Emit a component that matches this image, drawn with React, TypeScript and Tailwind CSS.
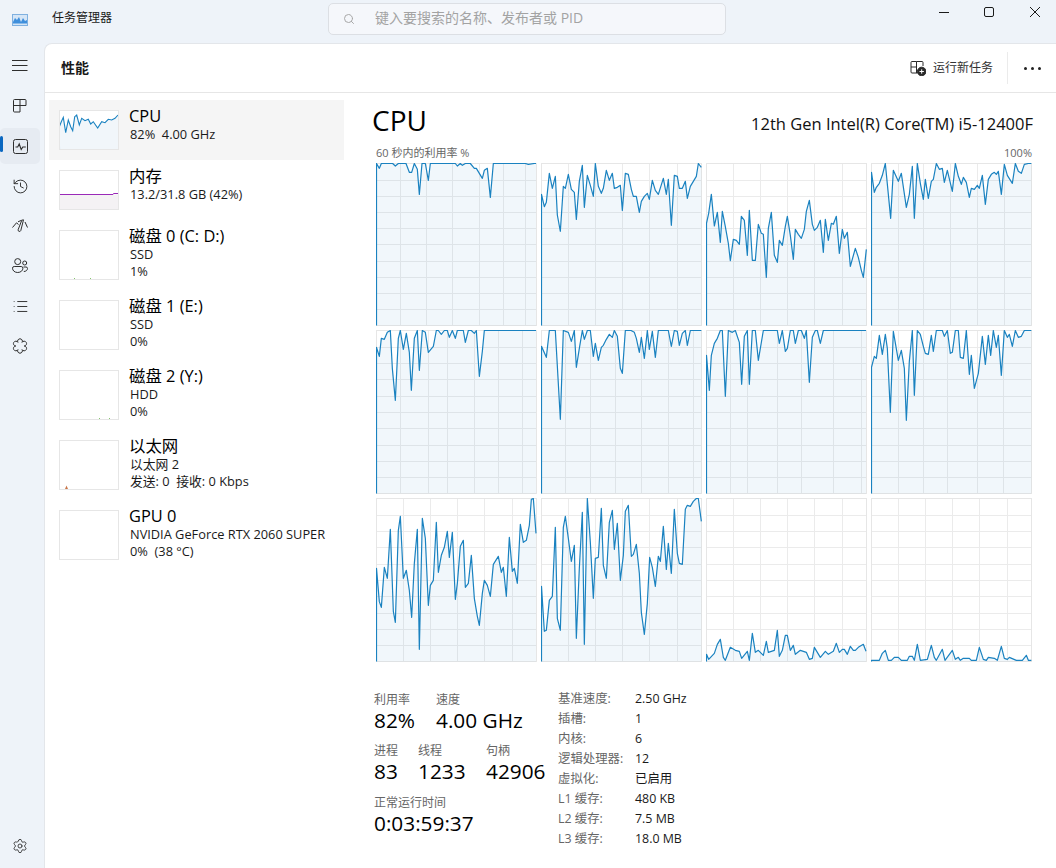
import React from "react";
import { History, List, Settings, Search } from "lucide-react";

type Cfg = { ox: number; oy: number; x: number; y: number; w: number; h: number; vs: number[]; hs: number[]; p: number[] };

const H1 = [180, 196, 212, 228, 244, 261, 277, 293, 309];
const H2 = [347, 363, 379, 396, 412, 428, 445, 461, 477];
const H3 = [515, 531, 547, 564, 580, 596, 613, 629, 645];

const cells: Cfg[] = [
  { ox: 366, oy: 150, x: 376, y: 163, w: 161, h: 163, hs: H1, vs: [400, 426, 452, 479, 503, 525],
    p: [31,40,40,55,46,40,80,40,88,48,97,40,120,40,130,67,137,67,145,40,154,58,160,133,168,40,178,40,187,91,193,40,268,40,274,48,283,40,289,46,298,40,313,40,325,55,331,55,349,85,355,61,364,55,373,142,382,40,478,40,487,43,505,40,510,40] },
  { ox: 366, oy: 150, x: 541, y: 163, w: 161, h: 163, hs: H1, vs: [568, 595, 622, 649, 677],
    p: [526,133,535,170,541,157,550,70,559,115,568,79,574,195,583,244,592,109,598,115,607,73,616,118,625,127,631,208,640,94,649,46,655,172,664,76,673,106,682,139,688,40,697,109,706,130,712,115,721,61,730,91,739,70,745,115,754,112,763,106,769,181,778,70,787,73,796,118,802,139,811,139,820,187,826,154,835,139,844,130,850,148,859,91,868,121,877,133,892,85,901,133,907,88,916,226,925,76,934,79,940,115,949,115,958,94,964,145,973,109,991,79,997,40,1006,52] },
  { ox: 700, oy: 160, x: 706, y: 163, w: 161, h: 163, hs: H1, vs: [733, 760, 787, 814, 842],
    p: [19,190,26,160,34,103,43,198,52,157,61,247,67,154,76,200,85,250,91,302,100,238,109,241,118,253,124,169,133,181,142,286,148,151,157,301,166,301,175,193,184,220,190,223,199,352,205,205,214,157,223,286,232,307,238,241,247,256,256,199,262,169,271,226,280,298,286,208,295,223,304,235,313,208,319,154,328,121,337,193,343,211,352,202,361,181,370,277,376,178,385,241,394,190,400,193,409,169,418,280,427,208,433,235,442,217,451,319,466,265,475,292,484,331,490,352,499,268] },
  { ox: 700, oy: 160, x: 871, y: 163, w: 161, h: 163, hs: H1, vs: [898, 923, 950, 977, 1004],
    p: [514,37,523,97,529,82,538,70,547,46,556,10,565,103,572,175,580,31,595,64,604,40,619,142,628,103,637,19,643,175,652,10,661,70,670,118,676,58,685,115,694,64,700,58,709,10,718,28,727,25,733,67,742,31,757,94,766,10,775,49,784,73,790,52,799,67,808,112,814,85,823,88,832,76,838,85,847,46,856,133,865,58,874,43,883,37,889,43,895,34,904,103,913,13,922,46,937,70,946,10,955,34,964,40,973,13,985,10,994,10] },
  { ox: 366, oy: 325, x: 376, y: 330, w: 161, h: 164, hs: H2, vs: [400, 428, 447, 474, 498, 522],
    p: [31,67,40,94,46,40,55,43,64,22,73,16,79,130,88,226,97,40,103,16,112,73,121,25,130,82,136,196,145,40,154,16,160,136,169,16,178,22,187,82,202,64,211,16,217,16,226,28,235,16,244,16,250,37,259,16,268,40,274,16,292,16,298,52,307,16,316,16,325,25,331,16,340,154,349,79,355,16,510,16] },
  { ox: 366, oy: 325, x: 541, y: 330, w: 161, h: 164, hs: H2, vs: [565, 590, 615, 641, 668, 693],
    p: [526,64,541,97,550,16,568,16,583,283,592,16,607,22,616,49,625,16,631,127,640,70,649,16,655,43,664,16,673,16,682,94,688,55,697,106,706,67,712,61,721,43,730,28,739,37,745,16,754,34,763,130,769,145,778,16,795,16,805,22,811,40,820,82,826,37,835,100,844,16,850,73,859,19,868,97,877,16,907,16,916,64,925,16,934,19,940,61,949,25,958,16,964,61,973,16,1006,16] },
  { ox: 700, oy: 325, x: 706, y: 330, w: 161, h: 164, hs: H2, vs: [730, 747, 777, 801, 833, 861],
    p: [19,91,28,196,34,91,43,55,52,40,61,16,67,16,76,214,85,16,97,22,106,16,118,52,125,178,133,34,142,16,148,178,157,16,166,16,175,106,190,16,232,16,238,55,247,16,256,79,262,70,271,16,280,16,286,55,295,16,304,16,313,40,319,16,328,172,337,37,346,16,352,16,361,55,370,16,498,16] },
  { ox: 700, oy: 325, x: 871, y: 330, w: 161, h: 164, hs: H2, vs: [898, 923, 947, 977, 1003],
    p: [514,127,523,94,529,100,538,31,547,88,556,28,562,70,571,262,580,19,595,106,604,76,613,130,619,286,628,109,637,16,643,211,652,16,661,28,670,64,676,85,685,88,694,31,700,79,709,16,727,16,733,34,742,16,751,85,757,82,766,16,775,16,781,97,790,100,799,16,808,148,814,91,823,190,835,145,847,34,856,118,865,31,872,91,880,16,889,67,895,31,904,151,913,16,922,37,928,28,937,64,946,16,955,37,964,34,973,16,994,16] },
  { ox: 366, oy: 490, x: 376, y: 498, w: 161, h: 164, hs: H3, vs: [403, 430, 457, 484, 512],
    p: [31,235,40,335,46,352,55,232,64,265,73,118,82,364,88,397,97,121,103,79,112,265,121,241,130,301,137,382,145,220,154,118,160,478,169,85,178,145,187,346,193,286,202,271,211,97,217,247,226,196,235,172,244,124,250,202,259,127,268,328,274,280,283,169,292,151,298,292,307,280,316,196,325,325,334,379,340,406,349,310,355,271,364,286,373,319,382,223,397,199,406,247,412,232,421,319,430,142,439,244,445,235,454,280,463,103,472,157,481,151,490,106,496,28,502,25,510,130] },
  { ox: 366, oy: 490, x: 541, y: 498, w: 161, h: 164, hs: H3, vs: [568, 595, 622, 649, 677],
    p: [526,289,535,424,541,421,550,331,559,319,568,112,574,385,583,421,592,112,598,79,607,145,616,214,625,166,631,445,640,235,649,67,655,463,664,25,673,157,682,325,688,205,697,202,706,55,712,226,721,265,730,97,739,61,745,178,754,100,763,271,772,196,778,64,787,46,796,199,802,193,811,163,820,250,826,367,835,433,844,340,851,202,859,232,868,289,877,199,883,214,892,109,901,238,907,160,916,250,925,58,934,190,940,220,949,223,958,58,964,46,973,49,982,34,991,25,997,25,1006,94] },
  { ox: 700, oy: 490, x: 706, y: 498, w: 161, h: 164, hs: H3, vs: [733, 760, 787, 814, 842],
    p: [19,493,26,508,43,490,52,463,61,448,70,502,76,511,91,472,106,481,118,484,125,505,142,484,148,511,157,430,166,487,175,481,190,496,199,454,205,487,223,481,232,421,238,499,247,481,256,436,262,436,271,481,280,466,286,493,301,481,319,487,328,508,337,505,343,472,361,502,376,484,385,493,400,484,409,460,418,487,427,478,433,478,442,493,451,469,460,481,466,481,475,472,490,463,498,484] },
  { ox: 700, oy: 490, x: 871, y: 498, w: 161, h: 164, hs: H3, vs: [898, 925, 952, 979, 1007],
    p: [514,511,526,511,538,511,547,490,556,481,565,511,574,511,583,502,595,502,604,511,622,511,628,499,637,499,643,511,652,463,661,511,682,508,694,466,703,502,709,511,727,478,735,511,757,481,766,508,775,502,781,511,790,505,808,505,814,511,829,511,838,472,850,508,859,511,865,502,883,505,892,511,904,469,913,505,922,508,928,502,949,511,967,511,979,496,985,511,994,511] },
];

function Chart({ c }: { c: Cfg }) {
  const pts: [number, number][] = [];
  for (let i = 0; i < c.p.length; i += 2) {
    pts.push([Math.min(c.w - 0.5, Math.max(0.5, c.ox + c.p[i] / 3 - c.x)), Math.min(c.h - 1, Math.max(0.5, c.oy + c.p[i + 1] / 3 - c.y))]);
  }
  const line = pts.map((q) => q.join(",")).join(" ");
  const last = pts[pts.length - 1];
  const area = `0.5,${c.h - 0.5} ${line} ${last[0]},${c.h - 0.5}`;
  return (
    <svg width={c.w} height={c.h} className="block">
      <rect x={0} y={0} width={c.w} height={c.h} fill="#fff" />
      {c.hs.map((y) => (
        <line key={y} x1={0} x2={c.w} y1={y - c.y + 0.5} y2={y - c.y + 0.5} stroke="#ebebeb" />
      ))}
      {c.vs.map((x) => (
        <line key={x} x1={x - c.x + 0.5} x2={x - c.x + 0.5} y1={0} y2={c.h} stroke="#ebebeb" />
      ))}
      <rect x={0.5} y={0.5} width={c.w - 1} height={c.h - 1} fill="none" stroke="#e6e6e6" />
      <polygon points={area} fill="#117dbb" fillOpacity={0.06} />
      <polyline points={`0.5,${c.h - 0.5} ${line}`} fill="none" stroke="#1a82c0" strokeWidth={1.2} strokeLinejoin="round" />
    </svg>
  );
}

const cpuThumb = [178,380,184,365,190,352,197,398,205,360,212,380,218,392,224,350,230,345,238,375,245,355,255,362,265,358,272,372,280,365,293,384,305,365,315,368,325,358,335,360,345,355,354,345];

function Thumb({ kind, h }: { kind: string; h: number }) {
  const w = 60;
  let inner: React.ReactNode = null;
  if (kind === "cpu") {
    const l = [];
    for (let i = 0; i < cpuThumb.length; i += 2) l.push(`${(cpuThumb[i] / 3 - 59).toFixed(1)},${(cpuThumb[i + 1] / 3 - 110).toFixed(1)}`);
    const s = l.join(" ");
    inner = (
      <>
        <polygon points={`0.5,39.5 ${s} 59,39.5`} fill="#f1f6fa" />
        <polyline points={`0.5,39.5 ${s}`} fill="none" stroke="#1a82c0" strokeWidth={1.1} />
      </>
    );
  } else if (kind === "mem") {
    inner = (
      <>
        <rect x={0.5} y={24.5} width={59} height={15} fill="#f4f2f4" />
        <polyline points="0.5,39.5 0.5,24.5 54,24.5 54.5,23.5 59,23.5" fill="none" stroke="#9a2ab8" />
      </>
    );
  } else if (kind === "d0") {
    inner = (
      <>
        <rect x={15} y={48} width={1} height={1} fill="#84c56c" />
        <rect x={31} y={48} width={1} height={1} fill="#84c56c" />
      </>
    );
  } else if (kind === "d2") {
    inner = (
      <>
        <rect x={40} y={48} width={1} height={1} fill="#84c56c" />
        <rect x={50} y={48} width={1} height={1} fill="#84c56c" />
      </>
    );
  } else if (kind === "net") {
    inner = <polygon points="6,49 9,49 7.5,45.500" fill="#c9764a" />;
  }
  return (
    <svg width={w} height={h} className="block shrink-0 mt-[10px]">
      <rect x={0} y={0} width={w} height={h} fill="#fff" />
      {inner}
      <rect x={0.5} y={0.5} width={w - 1} height={h - 1} fill="none" stroke="#e6e6e6" />
    </svg>
  );
}

const rows = [
  { kind: "cpu", h: 40, rh: "h-[60px]", t: "CPU", s: ["82%  4.00 GHz"], sel: true },
  { kind: "mem", h: 40, rh: "h-[60px]", t: "内存", s: ["13.2/31.8 GB (42%)"] },
  { kind: "d0", h: 50, rh: "h-[70px]", t: "磁盘 0 (C: D:)", s: ["SSD", "1%"] },
  { kind: "d1", h: 50, rh: "h-[70px]", t: "磁盘 1 (E:)", s: ["SSD", "0%"] },
  { kind: "d2", h: 50, rh: "h-[70px]", t: "磁盘 2 (Y:)", s: ["HDD", "0%"] },
  { kind: "net", h: 50, rh: "h-[70px]", t: "以太网", s: ["以太网 2", "发送: 0  接收: 0 Kbps"] },
  { kind: "gpu", h: 50, rh: "h-[70px]", t: "GPU 0", s: ["NVIDIA GeForce RTX 2060 SUPER", "0%  (38 °C)"] },
];

const I = "#2e2e2e";

function Rail() {
  const P = { stroke: I, fill: "none", strokeWidth: 1 };
  const items: React.ReactNode[] = [
    <svg key="m" width="16" height="12" viewBox="0 0 16 12" {...P}><path d="M0 .5h15.500M0 5.500h15.500M0 10.500h15.500" /></svg>,
    <svg key="p" width="14" height="14" viewBox="0 0 14 14" {...P}><path d="M1.500.5H7v12.500H1.500a1 1 0 0 1-1-1V1.500a1 1 0 0 1 1-1ZM.5 6.500H13V1.500a1 1 0 0 0-1-1H7" /></svg>,
    <svg key="f" width="15" height="15" viewBox="0 0 15 15" {...P}><rect x=".5" y=".5" width="14" height="14" rx="2" /><path d="M2.500 8h2.200l1.500-3 2 5.500 1.600-2.500h3" strokeWidth="1.100" /></svg>,
    <History key="h" size={17} strokeWidth={1.35} color={I} />,
    <svg key="g" width="16" height="14" viewBox="0 0 16 14" {...P}><path d="M.5 8.500 4.500 3.800l2 1.700M6 2.800 9.500 1.300M13 3l2.500 5.500" /><path d="M11.500.8 8.800 11.500a1.400 1.400 0 0 1-2.700-.7L9.800 1.200Z" /></svg>,
    <svg key="u" width="16" height="16" viewBox="0 0 16 16" {...P}><circle cx="5.700" cy="3.600" r="3" /><circle cx="12.700" cy="5" r="2" /><path d="M2.200 8.500h7a1.700 1.700 0 0 1 1.700 1.700c0 2.400-2.200 4.300-5.200 4.300s-5.200-1.900-5.200-4.300a1.700 1.700 0 0 1 1.700-1.700Z" /><path d="M11.500 9h2.500a1.500 1.500 0 0 1 1.500 1.500c0 1.700-1.600 3-3.700 3" /></svg>,
    <List key="l" size={17} strokeWidth={1.35} color={I} />,
    <svg key="s" width="16" height="16" viewBox="0 0 16 16" {...P}><path d="M10.100 4.360A2.400 2.400 0 1 1 12.200 8A2.400 2.400 0 1 1 10.100 11.640A2.400 2.400 0 1 1 5.900 11.640A2.400 2.400 0 1 1 3.800 8A2.400 2.400 0 1 1 5.900 4.360A2.400 2.400 0 1 1 10.100 4.360Z" /></svg>,
  ];
  return (
    <div className="w-[44px] shrink-0 flex flex-col pt-[3px] pb-[2px]">
      {items.map((n, i) => (
        <div key={i} className="h-[40px] flex items-center relative">
          <div className={`w-[40px] h-[36px] flex items-center justify-center rounded-[5px] ${i === 2 ? "bg-[#e6ebf2]" : ""}`}>{n}</div>
          {i === 2 && <div className="absolute left-0 top-[10px] w-[3px] h-[16px] rounded-[2px] bg-[#0a67c0]" />}
        </div>
      ))}
      <div className="mt-auto h-[40px] flex items-center">
        <div className="w-[40px] h-[36px] flex items-center justify-center"><Settings size={16} strokeWidth={1.3} color={I} /></div>
      </div>
    </div>
  );
}

const stat = "text-[12px] leading-[16px] text-[#666]";
const big = "text-[20.8px] leading-[28px] text-black -mt-[2px]";

const specs = [
  ["基准速度:", "2.50 GHz"], ["插槽:", "1"], ["内核:", "6"], ["逻辑处理器:", "12"],
  ["虚拟化:", "已启用"], ["L1 缓存:", "480 KB"], ["L2 缓存:", "7.5 MB"], ["L3 缓存:", "18.0 MB"],
];

export default function App() {
  return (
    <div className="w-[1056px] h-[868px] overflow-hidden flex flex-col bg-[#eef3f9] text-black font-['Open_Sans','Noto_Sans_CJK_SC',sans-serif]">
      <div className="h-[43px] shrink-0 flex items-start relative">
        <div className="w-[52px] pl-[12px] pt-[14px] shrink-0">
          <svg width="16" height="12" viewBox="0 0 16 12" className="block">
            <rect x=".5" y=".5" width="15" height="11" fill="#d5e5f6" stroke="#7fb0e0" />
            <path d="M1 8l2-4 2 2 2-3 2 5 2-4 2 3 2-1v3.500H1Z" fill="#3f8fdc" />
          </svg>
        </div>
        <div className="text-[12px] leading-[16px] mt-[10px] text-[#1a1a1a]">任务管理器</div>
        <div className="absolute left-[328px] top-[3px] w-[398px] h-[32px] rounded-[5px] border border-[#dcdfe4] bg-[#f5f7fb] flex items-center">
          <Search size={12} color="#a8a8a8" className="ml-[14px]" />
          <span className="ml-[20px] text-[14px] leading-[18px] -mt-[2px] text-[#a3a3a3]">键入要搜索的名称、发布者或 PID</span>
        </div>
        <div className="ml-auto">
          <svg width="120" height="24" viewBox="0 0 120 24" fill="none" stroke="#1a1a1a" strokeWidth="1" className="block">
            <path d="M3 12.500H13" />
            <rect x="48.500" y="7.500" width="9" height="9" rx="1.500" />
            <path d="M94 7l10 10M104 7 94 17" />
          </svg>
        </div>
      </div>
      <div className="flex-1 flex min-h-0">
        <Rail />
        <div className="flex-1 min-w-0 bg-white rounded-tl-[8px] border-l border-t border-[#e3e6ea] flex flex-col">
          <div className="h-[49px] shrink-0 border-b border-[#e6e6e6] flex items-center pl-[16px]">
            <div className="text-[14px] leading-[20px] font-semibold text-[#1a1a1a]">性能</div>
            <div className="ml-auto flex items-center">
              <svg width="16" height="16" viewBox="0 0 16 16" fill="none" stroke="#2a2a2a" strokeWidth="1">
                <path d="M6.500 1.500H2a1 1 0 0 0-1 1V12a1 1 0 0 0 1 1h5M6.500 1.500V13M1 7h5.500M6.500 1.500H12a1 1 0 0 1 1 1V6" />
                <circle cx="11.700" cy="11.500" r="4.300" fill="#2a2a2a" />
                <path d="M9.500 11.500h4.400M11.700 9.300v4.400" stroke="#fff" />
              </svg>
              <span className="ml-[7px] text-[12px] text-[#333]">运行新任务</span>
              <div className="ml-[14px] w-px h-[32px] bg-[#ebebeb]" />
              <div className="ml-[16px] mr-[15px] flex gap-[4px]">
                <span className="w-[3px] h-[3px] rounded-full bg-[#222]" />
                <span className="w-[3px] h-[3px] rounded-full bg-[#222]" />
                <span className="w-[3px] h-[3px] rounded-full bg-[#222]" />
              </div>
            </div>
          </div>
          <div className="flex-1 flex min-h-0">
            <div className="w-[327px] shrink-0 pl-[4px] pt-[7px]">
              {rows.map((r) => (
                <div key={r.kind} className={`${r.rh} w-[295px] flex pl-[10px] ${r.sel ? "bg-[#f5f5f5]" : ""}`}>
                  <Thumb kind={r.kind} h={r.h} />
                  <div className="ml-[10px] pt-[6px] whitespace-pre">
                    <div className="text-[16.4px] leading-[20px] text-black">{r.t}</div>
                    {r.s.map((x) => (
                      <div key={x} className="pl-[1px] text-[12.8px] leading-[17px] text-[#1a1a1a]">{x}</div>
                    ))}
                  </div>
                </div>
              ))}
            </div>
            <div className="flex-1 min-w-0">
              <div className="h-[44px] flex items-center justify-between pr-[23px] pt-[10px]">
                <div className="text-[28px] leading-[36px] text-black">CPU</div>
                <div className="text-[16.5px] leading-[24px] text-[#111] mt-[8px]">12th Gen Intel(R) Core(TM) i5-12400F</div>
              </div>
              <div className="h-[26px] pl-[4px] pr-[24px] pt-[9px] flex justify-between text-[11px] leading-[14px] text-[#666]">
                <span>60 秒内的利用率 %</span>
                <span>100%</span>
              </div>
              <div className="pl-[4px] grid grid-cols-[repeat(4,161px)] gap-[4px]">
                {cells.map((c, i) => <Chart key={i} c={c} />)}
              </div>
              <div className="mt-[30px] flex whitespace-pre">
                <div className="pl-[2px] w-[186px] shrink-0">
                  <div className="flex">
                    <div className="w-[62px]"><div className={stat}>利用率</div><div className={big}>82%</div></div>
                    <div><div className={stat}>速度</div><div className={big}>4.00 GHz</div></div>
                  </div>
                  <div className="flex mt-[9px]">
                    <div className="w-[44px]"><div className={stat}>进程</div><div className={big}>83</div></div>
                    <div className="w-[68px]"><div className={stat}>线程</div><div className={big}>1233</div></div>
                    <div><div className={stat}>句柄</div><div className={big}>42906</div></div>
                  </div>
                  <div className="mt-[10px]"><div className={stat}>正常运行时间</div><div className={big}>0:03:59:37</div></div>
                </div>
                <div className="grid grid-cols-[77px_auto] auto-rows-[20px] items-center text-[12.4px] leading-[20px] -mt-[3px]">
                  {specs.map(([a, b]) => (
                    <React.Fragment key={a}>
                      <div className="text-[#666]">{a}</div>
                      <div className="text-[#1a1a1a]">{b}</div>
                    </React.Fragment>
                  ))}
                </div>
              </div>
            </div>
          </div>
        </div>
      </div>
    </div>
  );
}
